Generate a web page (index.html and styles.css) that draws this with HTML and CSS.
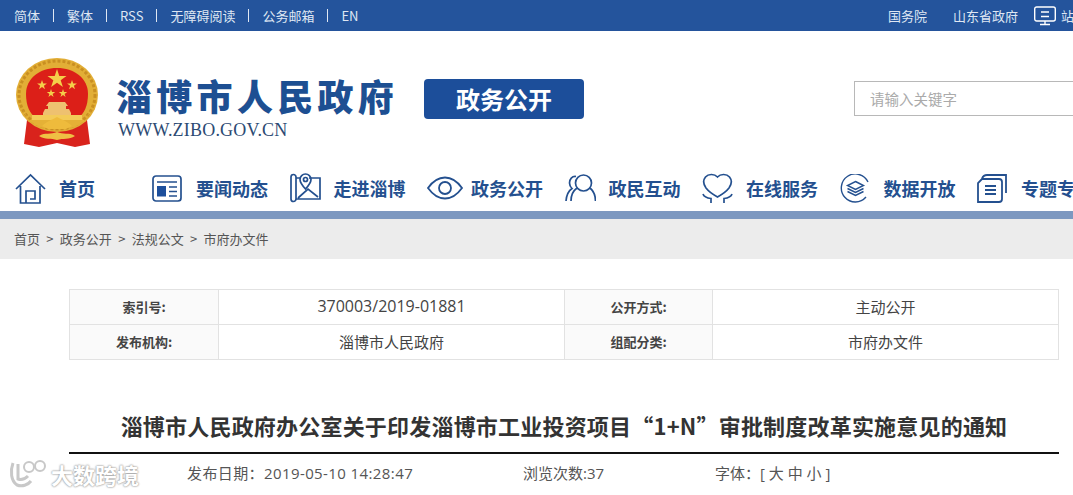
FILE: index.html
```html
<!DOCTYPE html>
<html lang="zh-CN">
  <head>
    <meta charset="UTF-8" />
    <meta name="viewport" content="width=device-width, initial-scale=1.0" />
    <title>淄博市人民政府办公室关于印发淄博市工业投资项目“1+N”审批制度改革实施意见的通知</title>
    <link rel="stylesheet" href="styles.css">
  </head>
  <body>
    <div class="topbar">
      <div class="top-links">
        <a>简体</a><i class="sep"></i>
        <a>繁体</a><i class="sep"></i>
        <a>RSS</a><i class="sep"></i>
        <a>无障碍阅读</a><i class="sep"></i>
        <a>公务邮箱</a><i class="sep"></i>
        <a>EN</a>
      </div>
      <div class="top-links top-right">
        <a>国务院</a><i class="sep"></i>
        <a>山东省政府</a>
        <svg class="site-icon" width="22" height="20" viewBox="0 0 22 20" fill="none" stroke="#fff" stroke-width="1.4">
          <rect x="0.7" y="1" width="20.6" height="14" rx="2" />
          <path d="M7 6h8M7 10.5h8M6 18.5h10M11 15v3" />
        </svg>
        <a class="site-map">站点地图</a>
      </div>
    </div>

    <div class="header">
      <svg class="emblem" width="84" height="90" viewBox="0 0 84 90">
        <path d="M12 62 L9 86 L24 89 L42 85 L60 89 L75 86 L72 62 Z" fill="#d9231c" />
        <ellipse cx="42" cy="37" rx="41" ry="37" fill="#e2ae36" />
        <ellipse cx="42" cy="37" rx="38" ry="34" fill="none" stroke="#c98f22" stroke-width="3" stroke-dasharray="3 2" />
        <path d="M11 36C11 20 25 10 42 10s31 10 31 26c0 12-4 20-10 24H21C15 56 11 48 11 36z" fill="#dc1f18" />
        <path d="M42 11l2.300 6.900h7.200l-5.800 4.300 2.200 6.900-5.900-4.300-5.900 4.300 2.200-6.900-5.800-4.300h7.200z" fill="#f4cf4a" />
        <path d="M27 22l1.200 3.500h3.700l-3 2.200 1.100 3.600-3-2.200-3 2.200 1.100-3.600-3-2.200h3.700z" fill="#f4cf4a" />
        <path d="M57 22l1.200 3.500h3.700l-3 2.200 1.100 3.600-3-2.200-3 2.200 1.100-3.600-3-2.200h3.700z" fill="#f4cf4a" />
        <path d="M36 31l1 3h3.200l-2.600 1.900 1 3.100-2.600-1.900-2.600 1.900 1-3.100-2.600-1.900H35z" fill="#f4cf4a" />
        <path d="M48 31l1 3h3.200l-2.600 1.900 1 3.100-2.600-1.900-2.600 1.900 1-3.100-2.600-1.900H47z" fill="#f4cf4a" />
        <path d="M34 44h16l3 4h-2v3h3l2 4v2H28v-2l2-4h3v-3h-2z" fill="#eec170" />
        <rect x="17" y="57" width="50" height="5" fill="#f3cb58" />
        <path d="M8 52c4 10 10 15 20 18l14-5 14 5c10-3 16-8 20-18l-6 10H14z" fill="#e5b136" />
        <path d="M27 68c5-5 10-6 15-9 5 3 10 4 15 9l-6 3H33z" fill="#eebb3c" />
        <path d="M24 78c6-4 12-1 18-4 6 3 12 0 18 4-6 4-12 2-18 4-6-2-12 0-18-4z" fill="#efc044" />
      </svg>
      <div class="brand">
        <div class="brand-name">淄博市人民政府</div>
        <div class="brand-url">WWW.ZIBO.GOV.CN</div>
      </div>
      <div class="badge">政务公开</div>
      <input class="search" type="text" placeholder="请输入关键字" />
    </div>

    <div class="nav">
      <a class="nav-item nav-home">
        <svg width="31" height="31" viewBox="0 0 31 31" fill="none" stroke="#24508f" stroke-width="1.7">
          <path d="M1 16L15.500 2 30 16M5.500 13v17h19.500V13" />
          <path d="M11 30V18h9v8h-5" />
        </svg>
        首页
      </a>
      <a class="nav-item">
        <svg width="31" height="27" viewBox="0 0 31 27" fill="none" stroke="#24508f" stroke-width="1.700">
          <rect x="1" y="1" width="28" height="25" rx="3" />
          <path d="M5 7h20M17 12h8M17 16.500h8M17 21h8" />
          <rect x="5" y="11" width="9" height="10.500" fill="#1d4f9c" stroke="none" />
        </svg>
        要闻动态
      </a>
      <a class="nav-item">
        <svg width="31" height="30" viewBox="0 0 31 30" fill="none" stroke="#24508f" stroke-width="1.700">
          <path d="M1 4v22a2.500 2.500 0 0 0 5 0V4a2.500 2.500 0 0 0-5 0zM6 5h5M19 5h11v21H6M8 25l10-9 10 8" />
          <path d="M15.500 1c-3 0-5.500 2.400-5.500 5.500 0 3.500 5.500 9.500 5.500 9.500S21 10 21 6.500C21 3.400 18.500 1 15.500 1z" />
          <circle cx="15.500" cy="6.500" r="2" />
        </svg>
        走进淄博
      </a>
      <a class="nav-item nav-eye">
        <svg width="36" height="24" viewBox="0 0 36 24" fill="none" stroke="#24508f" stroke-width="1.800">
          <path d="M1 12C6 5 11 1.500 18 1.500S30 5 35 12c-5 7-10 10.500-17 10.500S6 19 1 12z" />
          <circle cx="18" cy="12" r="6" />
        </svg>
        政务公开
      </a>
      <a class="nav-item">
        <svg width="31" height="28" viewBox="0 0 31 28" fill="none" stroke="#24508f" stroke-width="1.700">
          <circle cx="18.500" cy="9" r="8" />
          <path d="M12 14c-3.500 2.500-6 7-6 13M25 14c3 2.500 5.500 7 5.500 13" />
          <path d="M11 2.500C7 2 4.500 5 4.500 9c0 2.500 1 4 2.500 5.500C4 16.500 1.500 21 1 27" />
        </svg>
        政民互动
      </a>
      <a class="nav-item">
        <svg width="31" height="31" viewBox="0 0 31 31" fill="none" stroke="#24508f" stroke-width="1.700">
          <path d="M15.500 4C12.500.8 6.500.5 3.500 4 .8 7.300 1.500 11.500 4 15c2.500 3.300 7 6.500 11.500 9 4.500-2.500 9-5.700 11.500-9 2.500-3.500 3.200-7.700.5-11-3-3.500-9-3.200-12 0z" />
          <path d="M1 21c1 3 4 4 8 4.500V30M30 21c-1 3-4 4-8 4.500V30" />
        </svg>
        在线服务
      </a>
      <a class="nav-item">
        <svg width="31" height="29" viewBox="-1 0 31 29" fill="none" stroke="#24508f" stroke-width="1.400">
          <path d="M25 23A14 14 0 1 1 27 8" />
          <path d="M14.500 7.500l8 4-8 4-8-4zM6.500 14.500l8 4 8-4M6.500 17.500l8 4 8-4" />
        </svg>
        数据开放
      </a>
      <a class="nav-item">
        <svg width="31" height="29" viewBox="0 0 31 29" fill="none" stroke="#24508f" stroke-width="1.800">
          <path d="M4 28h18a3 3 0 0 0 3-3V8a3 3 0 0 0-3-3H5L1 9v19z" />
          <path d="M5 4.500C6 2 8 1 10 1h19v18" />
          <path d="M8 12h11M8 16h11M8 20h11" />
        </svg>
        专题专栏
      </a>
    </div>

    <div class="crumbs">
      <a>首页</a><span>&gt;</span><a>政务公开</a><span>&gt;</span><a>法规公文</a><span>&gt;</span><a>市府办文件</a>
    </div>

    <div class="container">
      <table class="info">
        <colgroup>
          <col class="col-label-first" />
          <col class="col-value-first" />
          <col class="col-label" />
          <col class="col-value" />
        </colgroup>
        <tr>
          <th>索引号:</th>
          <td class="num">370003/2019-01881</td>
          <th>公开方式:</th>
          <td>主动公开</td>
        </tr>
        <tr>
          <th>发布机构:</th>
          <td>淄博市人民政府</td>
          <th>组配分类:</th>
          <td>市府办文件</td>
        </tr>
      </table>

      <h1 class="title">淄博市人民政府办公室关于印发淄博市工业投资项目“1+N”审批制度改革实施意见的通知</h1>

      <div class="meta">
        <span class="meta-date">发布日期：2019-05-10 14:28:47</span>
        <span class="meta-views">浏览次数:37</span>
        <span>字体：[ 大 中 小 ]</span>
      </div>
    </div>

    <div class="watermark">
      <svg width="40" height="30" viewBox="0 0 40 30" fill="none" stroke="#c8c8c8" stroke-width="3">
        <path d="M4 4C1 12 2 22 8 26c5 2 11 0 14-4" />
        <path d="M9 5v15c3 1 7 0 10-3" />
        <circle cx="20" cy="8" r="5" stroke-width="2" />
        <circle cx="31" cy="7" r="5" stroke-width="2" />
      </svg>
      <span>大数跨境</span>
    </div>
  </body>
</html>
```

FILE: styles.css
```css
body {
  font-family: "Noto Sans CJK SC", "Open Sans", sans-serif;
  background-color: #fff;
  color: #333;
  margin: 0;
  padding: 0;
  min-width: 1073px;
  overflow-x: hidden;
  white-space: nowrap;
}
.topbar {
  background-color: #24549c;
  color: #dfe7f3;
  height: 31px;
  font-size: 13px;
  display: flex;
  justify-content: space-between;
  align-items: center;
  padding-left: 14px;
}
.top-links {
  display: flex;
  align-items: center;
  gap: 13px;
}
.top-right {
  width: 185px;
  flex: none;
}
.sep {
  width: 1px;
  height: 13px;
  background-color: #dfe7f3;
}
.site-icon {
  margin-left: 3px;
  margin-right: -8px;
  flex: none;
}
.header {
  height: 134px;
  display: flex;
  align-items: center;
  padding-left: 15px;
}
.emblem,
.brand,
.badge {
  flex: none;
}
.emblem {
  margin-top: 9px;
}
.brand {
  margin-left: 17px;
  margin-top: 16px;
}
.brand-name {
  font-size: 36px;
  line-height: 44px;
  font-weight: 900;
  letter-spacing: 4.300px;
  color: #1d4f92;
}
.brand-url {
  font-family: "Liberation Serif", serif;
  font-size: 18px;
  line-height: 20px;
  letter-spacing: 0.200px;
  margin-top: 3px;
  padding-left: 2px;
  color: #2c4a73;
}
.badge {
  width: 160px;
  height: 40px;
  line-height: 40px;
  margin-left: 26px;
  margin-top: 2px;
  background-color: #1c4e9a;
  border-radius: 4px;
  color: #fff;
  font-size: 24px;
  font-weight: 700;
  text-align: center;
}
.search {
  width: 260px;
  height: 35px;
  box-sizing: border-box;
  flex: none;
  margin-left: 270px;
  padding: 0 15px;
  border: 1px solid #b8b8b8;
  font-family: inherit;
  font-size: 14.500px;
}
.search::placeholder {
  color: #aaa;
}
.nav {
  height: 46px;
  display: flex;
  align-items: flex-start;
  padding-left: 15px;
}
.nav-item {
  display: flex;
  align-items: center;
  gap: 13px;
  height: 46px;
  margin-right: 21.500px;
  font-size: 18px;
  font-weight: 700;
  color: #24508f;
  flex: none;
}
.nav-item svg {
  flex: none;
}
.nav-home {
  margin-right: 57px;
}
.nav-eye {
  gap: 8px;
}
.crumbs {
  border-top: 8px solid #7d98c0;
  background-color: #ececec;
  height: 40px;
  line-height: 40px;
  padding-left: 14px;
  font-size: 13px;
  color: #555;
}
.crumbs span {
  margin: 0 6.300px;
}
.container {
  padding: 30px 14px 0 69px;
}
.info {
  width: 989px;
  table-layout: fixed;
  border-collapse: collapse;
  font-size: 15px;
}
.col-label-first {
  width: 149px;
}
.col-value-first {
  width: 346px;
}
.col-label {
  width: 148px;
}
.col-value {
  width: 346px;
}
.info th,
.info td {
  border: 1px solid #e2e2e2;
  height: 35px;
  padding: 0 0 2px;
  box-sizing: border-box;
  text-align: center;
  color: #444;
}
.info th {
  font-size: 13px;
  font-weight: 700;
  background-color: #fafafa;
}
.info .num {
  font-family: "Open Sans", sans-serif;
  font-size: 16px;
}
.title {
  margin: 48px 0 0;
  height: 44px;
  line-height: 34px;
  border-bottom: 2px solid #111;
  font-size: 22px;
  font-weight: 700;
  letter-spacing: 0.200px;
  text-align: center;
  color: #333;
}
.meta {
  display: flex;
  padding: 9px 0 0 118px;
  font-family: "Open Sans", "Noto Sans CJK SC", sans-serif;
  font-size: 15px;
  line-height: 20px;
  color: #555;
}
.meta-date {
  width: 336px;
  letter-spacing: 0.400px;
}
.meta-views {
  width: 192px;
}
.watermark {
  position: absolute;
  left: 9px;
  top: 458px;
  display: flex;
  align-items: center;
  gap: 2px;
  font-size: 22px;
  font-weight: 700;
  color: #fff;
  text-shadow: 0 0 2px #999, 0 0 2px #999;
}
```
